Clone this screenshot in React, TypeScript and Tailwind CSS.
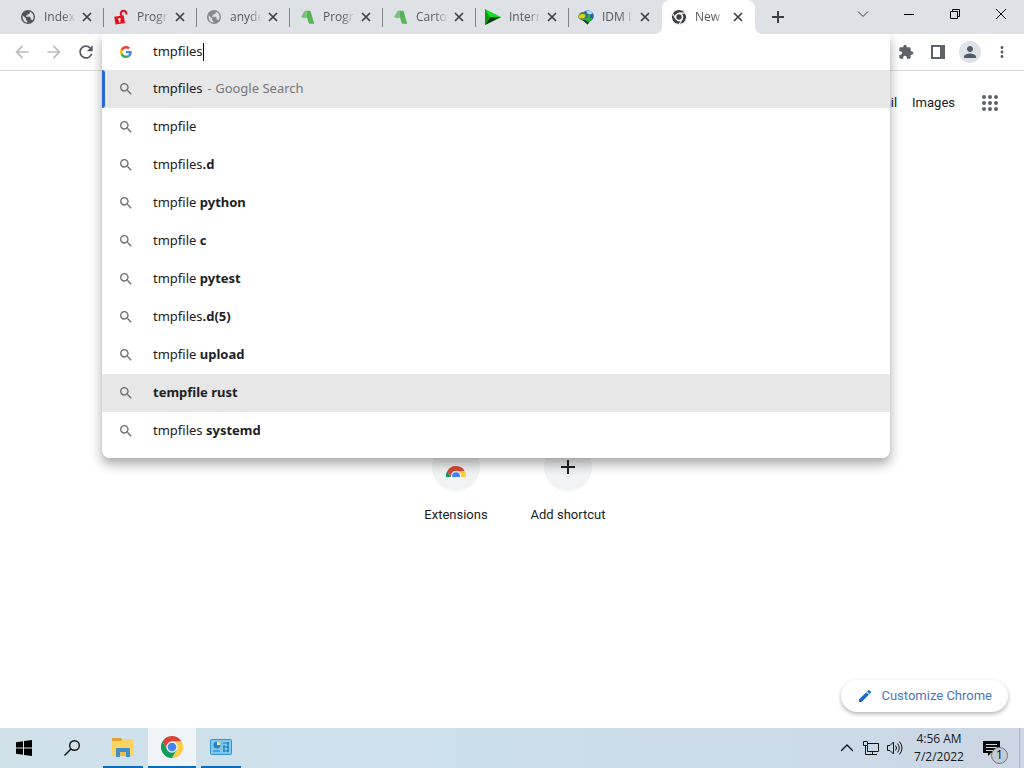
import React, { useState } from "react";
import {
  MdAdd,
  MdArrowBack,
  MdArrowForward,
  MdEdit,
  MdExtension,
  MdMoreVert,
  MdPerson,
  MdRefresh,
  MdSearch,
} from "react-icons/md";

const ChromeLogo = ({ className, viewBox = "0 0 48 48" }: { className?: string; viewBox?: string }) => (
  <svg className={className} viewBox={viewBox} aria-hidden="true">
    <path fill="#db4437" d="M3.2 12A24 24 0 0 1 44.8 12L24 12A12 12 0 0 0 13.6 30Z" />
    <path fill="#ffcd40" d="M44.8 12A24 24 0 0 1 24 48L34.4 30A12 12 0 0 0 24 12Z" />
    <path fill="#0f9d58" d="M24 48A24 24 0 0 1 3.2 12L13.6 30A12 12 0 0 0 34.4 30Z" />
    <circle cx="24" cy="24" r="12" fill="#f1f1f1" />
    <circle cx="24" cy="24" r="9.5" fill="#4285f4" />
  </svg>
);

const ChromeMono = () => (
  <svg className="size-4" viewBox="0 0 48 48" aria-hidden="true">
    <g fill="#3c4043" stroke="#fff" strokeWidth="3">
      <path d="M4.5 12.5A22.5 22.5 0 0 1 43.5 12.5L24 12.5A11.5 11.5 0 0 0 14 30Z" />
      <path d="M43.5 12.5A22.5 22.5 0 0 1 24 46.5L34 30A11.5 11.5 0 0 0 24 12.5Z" />
      <path d="M24 46.5A22.5 22.5 0 0 1 4.5 12.5L14 30A11.5 11.5 0 0 0 34 30Z" />
    </g>
    <circle cx="24" cy="24" r="11" fill="#fff" />
    <circle cx="24" cy="24" r="8" fill="#3c4043" />
  </svg>
);

const Globe = ({ className }: { className?: string }) => (
  <svg className={className} viewBox="0 0 16 16" aria-hidden="true">
    <circle cx="8" cy="8" r="7" fill="currentColor" />
    <path
      fill="#dee1e6"
      d="M2.600 6.200 6 9.500 6 11 7.300 12.200V13.700Q2.300 13 2.600 6.200ZM9.800 2.700Q13.600 4 13.600 8 13.600 10 12.600 11.400 12 10.600 11.200 10.600H10.600V8.500L9.800 7.800H6V6.500H7.400V5.200H8.800L9.800 4.200Z"
    />
  </svg>
);

const RedUnlock = () => (
  <svg className="size-4" viewBox="0 0 16 16" aria-hidden="true">
    <path fill="none" stroke="#e8101c" strokeWidth="2" d="M8.500 8 7.800 5Q7.600 2.200 10.200 1.700 12.800 1.500 13.300 4L13.500 5.500" />
    <path fill="#e8101c" d="M1.200 7.800 10.600 6.200 12 14 2.600 15.600Z" />
    <circle cx="6.400" cy="10.300" r="1.300" fill="#fff" />
    <path fill="#fff" d="M6 10.500H7L7.500 13.200 6.200 13.400Z" />
  </svg>
);

const GreenHook = () => (
  <svg className="size-4" viewBox="0 0 16 16" aria-hidden="true">
    <path fill="#56b356" d="M6 1.800H10.500Q11.500 1.800 11.800 2.800L15.200 14.800H11Q10 14.800 9.600 13.800L7 5Z" />
    <path fill="#7cc47a" d="M2 8 5.200 2.600Q5.700 1.800 6.500 1.800L8 2 8 8.500Q5 10 2 8Z" />
  </svg>
);

const GreenPlay = () => (
  <svg className="size-4" viewBox="0 0 16 16" aria-hidden="true">
    <path fill="#12e01c" d="M0 0 16 8 0 16Z" />
    <path fill="#04350a" d="M0 16 5 8.500 16 8Z" />
    <path fill="#0a9a10" d="M0 0 5 8.500 0 16Z" />
  </svg>
);

const IdmIcon = () => (
  <svg className="size-4" viewBox="0 0 16 16" aria-hidden="true">
    <circle cx="10" cy="7" r="5.800" fill="#2a62a8" />
    <path fill="#a9dcea" d="M8 1.800Q12 0 15 4.200L11 6 9 4Z" />
    <path fill="#3f8f35" d="M0 8Q1 3 5.500 3L8 5 6.500 9 8 12 4 11.500Q1 11 0 8Z" />
    <path fill="#f0c824" d="M.5 7Q3 4 7 5.500L7.500 8Q4 10.500 1 9Z" />
    <path fill="#2fae36" d="M7 9 9.500 8.500V5.500L12 5V8.500L14.500 9.500 9.500 15.500 4.500 11Z" />
    <path fill="#1d3350" d="M4.500 11 9.500 15.500 11 13.700 7 11Z" />
  </svg>
);

const GoogleG = () => (
  <svg className="size-3" viewBox="0 0 48 48" aria-hidden="true">
    <path
      fill="#ea4335"
      d="M24 9.500c3.540 0 6.710 1.220 9.210 3.600l6.850-6.850C35.900 2.380 30.470 0 24 0 14.620 0 6.510 5.380 2.560 13.220l7.980 6.190C12.430 13.720 17.740 9.500 24 9.500z"
    />
    <path
      fill="#4285f4"
      d="M46.980 24.550c0-1.570-.15-3.090-.38-4.550H24v9.020h12.940c-.58 2.960-2.260 5.480-4.780 7.180l7.730 6c4.510-4.180 7.090-10.360 7.090-17.650z"
    />
    <path
      fill="#fbbc05"
      d="M10.530 28.590c-.48-1.450-.76-2.990-.76-4.590s.27-3.140.76-4.590l-7.980-6.190C.92 16.460 0 20.120 0 24c0 3.880.92 7.540 2.560 10.780l7.970-6.190z"
    />
    <path
      fill="#34a853"
      d="M24 48c6.480 0 11.930-2.130 15.890-5.810l-7.730-6c-2.150 1.450-4.920 2.300-8.160 2.300-6.260 0-11.570-4.220-13.470-9.910l-7.980 6.190C6.510 42.620 14.620 48 24 48z"
    />
  </svg>
);

const CloseIcon = () => (
  <svg className="size-[10px]" viewBox="0 0 10 10" stroke="#3c4043" strokeWidth="1.700" aria-hidden="true">
    <path d="M1 1 9 9M9 1 1 9" />
  </svg>
);

const TABS = [
  { title: "Index", icon: <Globe className="size-4 text-[#50545a]" /> },
  { title: "Progr", icon: <RedUnlock /> },
  { title: "anyde", icon: <Globe className="size-4 text-[#85888d]" /> },
  { title: "Progr", icon: <GreenHook /> },
  { title: "Carto", icon: <GreenHook /> },
  { title: "Intern", icon: <GreenPlay /> },
  { title: "IDM I", icon: <IdmIcon /> },
  { title: "New", icon: <ChromeMono /> },
];

const SUGGESTIONS = [
  { text: "tmpfiles", bold: "", note: "Google Search" },
  { text: "tmpfile", bold: "" },
  { text: "tmpfiles", bold: ".d" },
  { text: "tmpfile ", bold: "python" },
  { text: "tmpfile ", bold: "c" },
  { text: "tmpfile ", bold: "pytest" },
  { text: "tmpfiles", bold: ".d(5)" },
  { text: "tmpfile ", bold: "upload" },
  { text: "", bold: "tempfile rust" },
  { text: "tmpfiles ", bold: "systemd" },
];

const TabStrip = () => {
  const active = TABS.length - 1;

  return (
    <header className="relative z-20 flex h-[34px] shrink-0 bg-[#dee1e6] pl-[11px]">
      {TABS.map((tab, i) => (
        <div
          key={i}
          className={[
            "relative flex w-[93px] shrink-0 items-center pl-[9px]",
            i === active ? "rounded-t-lg bg-white" : "",
          ].join(" ")}
        >
          {i === active && (
            <>
              <span className="absolute bottom-0 -left-2 size-2 bg-[radial-gradient(circle_at_0_0,transparent_8px,#fff_8px)]" />
              <span className="absolute -right-2 bottom-0 size-2 bg-[radial-gradient(circle_at_100%_0,transparent_8px,#fff_8px)]" />
            </>
          )}
          <button className="flex items-center gap-2">
            <span className="flex size-4 items-center justify-center">{tab.icon}</span>
            <span className="w-8 text-left text-xs whitespace-nowrap text-[#55595d] [mask-image:linear-gradient(to_right,#000_60%,transparent)]">
              {tab.title}
            </span>
          </button>
          <button className="ml-[6px]" aria-label="Close tab">
            <CloseIcon />
          </button>
          {i < active - 1 && <span className="absolute top-2 right-0 h-[19px] w-px bg-[#808388]" />}
        </div>
      ))}
      <button className="flex w-[46px] items-center justify-center" aria-label="New tab">
        <svg className="size-3" viewBox="0 0 12 12" stroke="#3c4043" strokeWidth="2">
          <path d="M6 0V12M0 6H12" />
        </svg>
      </button>
      <div className="ml-auto flex h-7">
        <button className="flex w-[46px] items-center justify-center" aria-label="Search tabs">
          <svg className="size-3" viewBox="0 0 12 12" fill="none" stroke="#333">
            <path d="M1 3.500 6 8.500 11 3.500" />
          </svg>
        </button>
        <button className="flex w-[46px] items-center justify-center" aria-label="Minimize">
          <svg className="size-3" viewBox="0 0 12 12" fill="none" stroke="#000">
            <path d="M1 6.500H11" />
          </svg>
        </button>
        <button className="flex w-[46px] items-center justify-center" aria-label="Restore">
          <svg className="size-3" viewBox="0 0 12 12" fill="none" stroke="#000">
            <path d="M1.500 3.500H8.500V10.500H1.500ZM3.500 3.500V1.500H10.500V8.500H8.500" />
          </svg>
        </button>
        <button className="flex w-[46px] items-center justify-center" aria-label="Close">
          <svg className="size-3" viewBox="0 0 12 12" fill="none" stroke="#000">
            <path d="M1 1 11 11M11 1 1 11" />
          </svg>
        </button>
      </div>
    </header>
  );
};

const Omnibox = () => {
  const [query, setQuery] = useState("tmpfiles");
  const [hovered, setHovered] = useState(8);

  return (
    <div className="absolute inset-x-0 top-0 rounded-b-lg bg-white pb-2 font-['Noto_Sans',sans-serif] shadow-[0_6px_12px_rgba(0,0,0,0.35)]">
      <div className="flex h-9 items-center pl-[18px]">
        <GoogleG />
        <input
          aria-label="Address and search bar"
          value={query}
          onChange={(e) => setQuery(e.target.value)}
          className="ml-[21px] field-sizing-content text-[13px] text-[#202124] outline-none"
        />
        <span className="h-[18px] w-px bg-black" />
      </div>
      <ul>
        {SUGGESTIONS.map((s, i) => (
          <li key={i} onMouseEnter={() => setHovered(i)}>
            <button
              className={[
                "relative flex h-[38px] w-full items-center pl-4 text-left text-[13px] text-[#202124]",
                i === 0 || i === hovered ? "bg-[#e7e7e7]" : "",
              ].join(" ")}
            >
              {i === 0 && <span className="absolute inset-y-0 left-0 w-[3px] rounded-r-sm bg-[#2468d8]" />}
              <MdSearch className="size-4 text-[#6b6e72]" />
              <span className="ml-[19px] whitespace-pre">
                {s.text}
                <b className="font-bold">{s.bold}</b>
              </span>
              {s.note && <span className="ml-[5px] whitespace-pre text-[#75787c]">- {s.note}</span>}
            </button>
          </li>
        ))}
      </ul>
    </div>
  );
};

const Toolbar = () => (
  <div className="relative z-10 flex h-[37px] shrink-0 border-b border-[#d9dadc] bg-white">
    <div className="flex pl-[6px]">
      <button className="flex w-8 items-center justify-center text-[#babcbe]" aria-label="Back">
        <MdArrowBack className="size-5" />
      </button>
      <button className="flex w-8 items-center justify-center text-[#babcbe]" aria-label="Forward">
        <MdArrowForward className="size-5" />
      </button>
      <button className="flex w-8 items-center justify-center text-[#55585c]" aria-label="Reload">
        <MdRefresh className="size-5" />
      </button>
    </div>
    <div className="relative flex-1">
      <Omnibox />
    </div>
    <div className="flex pr-[6px] text-[#5f6368]">
      <button className="flex w-8 items-center justify-center" aria-label="Extensions">
        <MdExtension className="size-4" />
      </button>
      <button className="flex w-8 items-center justify-center" aria-label="Side panel">
        <svg className="size-4" viewBox="0 0 16 16" fill="currentColor">
          <path fillRule="evenodd" d="M1 1H15V15H1ZM3 3V13H10V3Z" />
        </svg>
      </button>
      <button className="flex w-8 items-center justify-center" aria-label="Profile">
        <span className="flex size-[22px] items-center justify-center rounded-full bg-[#dfe2e8] text-[#4f5b6b]">
          <MdPerson className="size-[18px]" />
        </span>
      </button>
      <button className="flex w-8 items-center justify-center" aria-label="Menu">
        <MdMoreVert className="size-[18px]" />
      </button>
    </div>
  </div>
);

const NewTabPage = () => (
  <main className="relative flex-1 bg-white font-[Roboto,sans-serif] text-[13px] text-[#202124]">
    <nav className="flex h-16 items-center justify-end pr-[26px]">
      <a href="#gmail">Gmail</a>
      <a href="#images" className="ml-[15px]">
        Images
      </a>
      <button className="ml-[27px]" aria-label="Google apps">
        <svg className="size-4" viewBox="0 0 16 16" fill="#5f6368">
          {[2, 8, 14].map((y) => [2, 8, 14].map((x) => <circle key={`${x}-${y}`} cx={x} cy={y} r="2" />))}
        </svg>
      </button>
    </nav>
    <div className="flex justify-center pt-[308px]">
      <a href="#extensions" className="flex w-28 flex-col items-center gap-[14px]">
        <span className="flex size-12 items-center justify-center rounded-full bg-[#f1f3f4] pt-[9px]">
          <ChromeLogo className="h-[11px] w-5" viewBox="0 0 48 26" />
        </span>
        <span className="leading-5">Extensions</span>
      </a>
      <button className="flex w-28 flex-col items-center gap-[14px]">
        <span className="flex size-12 items-center justify-center rounded-full bg-[#f1f3f4]">
          <MdAdd className="size-6" />
        </span>
        <span className="leading-5">Add shortcut</span>
      </button>
    </div>
    <button className="absolute right-4 bottom-4 flex h-8 items-center gap-2 rounded-full bg-white px-4 text-[#4a76bd] shadow-[0_2px_4px_rgba(0,0,0,0.3)]">
      <MdEdit className="size-4 text-[#1a66cc]" />
      Customize Chrome
    </button>
  </main>
);

const Taskbar = () => (
  <footer className="flex h-10 shrink-0 bg-linear-to-r from-[#d0e1ea] via-[#cbdfea] to-[#ccd6e5]">
    <button className="flex w-12 items-center justify-center" aria-label="Start">
      <svg className="size-4" viewBox="0 0 16 16">
        <path d="M0 2.200 7 1.200V7.500H0ZM8 1 16 0V7.500H8ZM0 8.500H7V14.800L0 13.800ZM8 8.500H16V16L8 15Z" />
      </svg>
    </button>
    <button className="flex w-12 items-center justify-center" aria-label="Search">
      <svg className="size-4" viewBox="0 0 16 16" fill="none" stroke="#111" strokeWidth="1.400">
        <circle cx="10.500" cy="5.500" r="4.800" />
        <path d="M7 9 0.500 15.500" />
      </svg>
    </button>
    <div className="ml-[7px] flex gap-[5px]">
      <button className="flex w-10 items-center justify-center border-b-2 border-[#0a6cbd]" aria-label="File Explorer">
        <svg className="h-[19px] w-[22px]" viewBox="0 0 22 19">
          <path fill="#dfa234" d="M0 0H9L11 3H0Z" />
          <path fill="#fbd361" d="M0 3 9 3 11 1H20Q21.500 1 21.500 3V18H0Z" />
          <path fill="#3f8fcb" d="M4 11Q4 10 5 10H17Q18 10 18 11V19H14V14H8V19H4Z" />
          <path fill="#f0bd48" d="M8 14H14V18H8Z" />
        </svg>
      </button>
      <button className="flex w-12 items-center justify-center border-b-2 border-[#0a6cbd] bg-[#eef4f8]" aria-label="Chrome">
        <ChromeLogo className="size-[22px]" />
      </button>
      <button className="flex w-10 items-center justify-center border-b-2 border-[#0a6cbd]" aria-label="Control Panel">
        <svg className="h-4 w-[22px]" viewBox="0 0 22 16">
          <rect x=".5" y=".5" width="21" height="15" rx="1" fill="#7cc8ee" stroke="#3593cd" />
          <circle cx="7" cy="6" r="3.500" fill="#2b7fc0" />
          <path fill="#f5e9a0" d="M7 6V2.500A3.500 3.500 0 0 1 10.500 6Z" />
          <path stroke="#2077b5" strokeWidth="1.200" fill="none" d="M3 12H10M13 4H19M13 8H19M13 12H19M14 6V13M18 3V13" />
        </svg>
      </button>
    </div>
    <div className="ml-auto flex items-center">
      <button className="flex w-6 justify-center" aria-label="Show hidden icons">
        <svg className="size-3" viewBox="0 0 12 12" fill="none" stroke="#111" strokeWidth="1.300">
          <path d="M0 9 6 3 12 9" />
        </svg>
      </button>
      <button className="flex w-6 justify-center" aria-label="Network">
        <svg className="size-4" viewBox="0 0 16 16" fill="none" stroke="#111">
          <path d="M4.500 3.500H15.500V11.500H4.500V6M9.500 11.500V14.500M6 14.500H14M2.500 6V14.500H6M.5 1.500H4.500V5.500H.5Z" />
        </svg>
      </button>
      <button className="flex w-6 justify-center" aria-label="Volume">
        <svg className="size-[18px]" viewBox="0 0 18 18" fill="none" stroke="#111">
          <path d="M1.500 6.500H4L7.500 3V15L4 11.500H1.500ZM9.500 6.500Q11.500 9 9.500 11.500M11.500 4.500Q15 9 11.500 13.500M13.500 2.500Q18.500 9 13.500 15.500" />
        </svg>
      </button>
      <time className="w-[64px] text-center text-xs leading-[18px] text-[#16181a]">
        4:56 AM
        <br />
        7/2/2022
      </time>
      <button className="relative ml-3 mr-[19px]" aria-label="Notifications">
        <svg className="h-[17px] w-[17px]" viewBox="0 0 17 17">
          <path fill="#0a0a0a" d="M0 1H17V13H8L5 16V13H0Z" />
          <path stroke="#ccd6e5" d="M3 4.500H14M3 7.500H14M3 10.500H10" />
        </svg>
        <span className="absolute top-[7px] left-2 flex size-[17px] items-center justify-center rounded-full border border-[#6f757d] bg-[#c3cad3] text-xs text-black">
          1
        </span>
      </button>
      <span className="mr-1 h-10 w-px bg-[#a9b4c4]" />
    </div>
  </footer>
);

export default function App() {
  return (
    <div className="flex h-screen flex-col overflow-hidden font-['Open_Sans',sans-serif]">
      <TabStrip />
      <Toolbar />
      <NewTabPage />
      <Taskbar />
    </div>
  );
}
